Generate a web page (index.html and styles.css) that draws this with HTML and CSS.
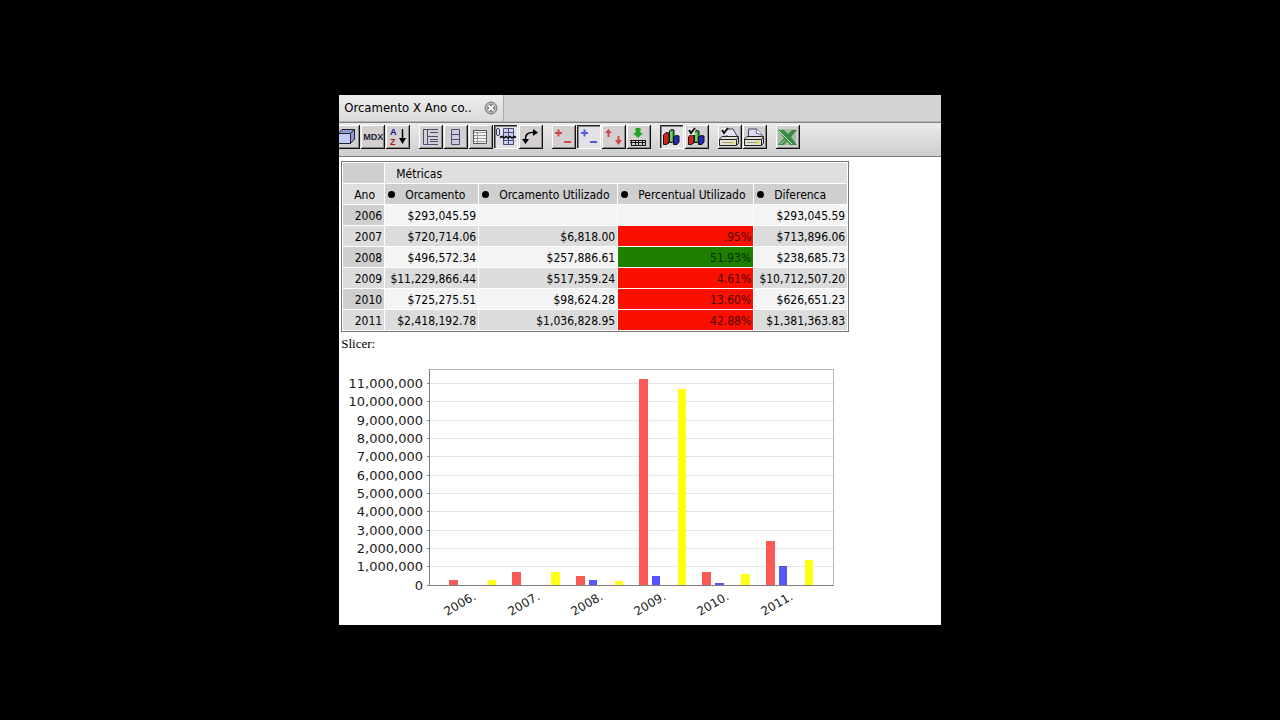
FILE: index.html
```html
<!DOCTYPE html>
<html lang="pt">
<head>
	<meta charset="UTF-8">
	<title>Orcamento X Ano</title>
	<link rel="stylesheet" href="styles.css">
</head>
<body>
	<div class="window">
		<div class="tabs">
			<div class="tab">
				<button class="tab_title">Orcamento X Ano co..</button>
				<button class="close" aria-label="Fechar">
					<svg width="14" height="14" viewBox="0 0 14 14">
						<circle cx="7" cy="7" r="6" fill="#b4b4b4" stroke="#777"/>
						<path d="M4.5 4.5L9.5 9.5M9.5 4.5L4.5 9.5" stroke="#666" stroke-width="4"/>
						<path d="M4.5 4.5L9.5 9.5M9.5 4.5L4.5 9.5" stroke="#fff" stroke-width="2"/>
					</svg>
				</button>
			</div>
		</div>
		<div class="toolbar">
			<div class="group">
				<button class="tool" aria-label="Cubo">
					<svg viewBox="0 0 24 24"><path d="M2 8.5L6 4.5H18.5V14L14.5 18.5H2z" fill="#8f9ad0" stroke="#223"/><path d="M2 8.5H14.5V18.5H2z" fill="#c3cbf7" stroke="#223"/><path d="M14.5 8.5L18.5 4.5" stroke="#223"/></svg>
				</button>
				<button class="tool mdx">MDX</button>
				<button class="tool" aria-label="Ordenar">
					<svg viewBox="0 0 24 24"><text class="az" x="4" y="10" fill="#15158c">A</text><text class="az" x="4" y="20" fill="#b01414">Z</text><path d="M16.5 4V17" stroke="#000" stroke-width="1.5"/><path d="M13 13H20L16.5 19z"/></svg>
				</button>
			</div>
			<div class="group">
				<button class="tool" aria-label="Membros pai">
					<svg viewBox="0 0 24 24"><path d="M4 4.5H19M4.5 4.5V19.5H8M8.5 4.5V11.5H19M11 7.5H19M8.5 11.5V19.5H19M11 14.5H19M11 16.5H19" fill="none" stroke="#4b4b78"/></svg>
				</button>
				<button class="tool" aria-label="Ocultar repetidos">
					<svg viewBox="0 0 24 24"><path d="M7.5 4.5H15.5V19.5H7.5zM7.5 9.5H15.5M7.5 14.5H15.5" fill="#ccd" stroke="#4b4b78"/></svg>
				</button>
				<button class="tool" aria-label="Propriedades">
					<svg viewBox="0 0 24 24"><path d="M4.5 5.5H17.5V18.5H4.5z" fill="#f4f4ee" stroke="#555"/><path d="M5 7.5H17M5 10.5H17M5 13.5H17M5 16.5H17M8.5 8V18" stroke="#999"/></svg>
				</button>
				<button class="tool pressed" aria-label="Suprimir vazios">
					<svg viewBox="0 0 24 24"><rect x="2.5" y="3.5" width="3" height="7" rx="1.5" fill="none" stroke="#336"/><path d="M9.5 3.5H19.5V19.5H9.5zM14.5 3.5V19.5M9.5 7.5H19.5M9.5 15.5H19.5" fill="#ccd0ee" stroke="#4b4b78"/><path d="M6 12.5L8 11.5L10 13L12 11.5L14 13L16 11.5L18 13L20 11.5L22 12.5" fill="none" stroke="#000" stroke-width="1.5"/></svg>
				</button>
				<button class="tool" aria-label="Trocar eixos">
					<svg viewBox="0 0 24 24"><path d="M6.5 16V13Q7 7.5 13 7.5H16" fill="none" stroke="#000" stroke-width="1.5"/><path d="M14 4L19 7.5L14 11zM3 14H10L6.5 19z"/></svg>
				</button>
			</div>
			<div class="group">
				<button class="tool" aria-label="Detalhar membro">
					<svg viewBox="0 0 24 24"><path d="M3 8H10M6.5 4.5V11.5M12 17H19" stroke="#d04545" stroke-width="2"/></svg>
				</button>
				<button class="tool pressed" aria-label="Detalhar posição">
					<svg viewBox="0 0 24 24"><path d="M4 8H11M7.5 4.5V11.5M13 17H20" stroke="#5258dc" stroke-width="2"/></svg>
				</button>
				<button class="tool" aria-label="Substituir">
					<svg viewBox="0 0 24 24"><path d="M6.5 7V12M16.5 11V17" stroke="#d04545" stroke-width="2"/><path d="M3 8L6.5 4L10 8zM13 15H20L16.5 20z" fill="#d04545"/></svg>
				</button>
				<button class="tool" aria-label="Detalhar tabela">
					<svg viewBox="0 0 24 24"><path d="M8.5 3H13.5V8H16L11 13L6 8H8.5z" fill="#22a522"/><path d="M3 15.5H19M3 17.5H19M4 20.5H19M4.5 15V20M8.5 15V20M11.5 15V20M15.5 15V20M18.5 15V20" stroke="#111"/></svg>
				</button>
			</div>
			<div class="group">
				<button class="tool pressed" aria-label="Mostrar gráfico">
					<svg viewBox="0 0 24 24"><g stroke="#111"><path d="M3.5 10L6 7.5L9 8V18L6 19.5H3.5z" fill="#d32020"/><path d="M9.5 6L11 4.5L14 5V16L12 17.5H9.5z" fill="#35b535"/><path d="M13.5 12L16 10.5L19 11V17L17 19.5H13.5z" fill="#2929b5"/></g><path d="M11 7V16" stroke="#a2f0a2"/></svg>
				</button>
				<button class="tool" aria-label="Configurar gráfico">
					<svg viewBox="0 0 24 24"><g stroke="#111"><path d="M3.5 12L6 9.5L9 10V18L6 19.5H3.5z" fill="#d32020"/><path d="M9.5 7L11 5.5L14 6V16L12 17.5H9.5z" fill="#35b535"/><path d="M13.5 12L16 10.5L19 11V17L17 19.5H13.5z" fill="#2929b5"/></g><path d="M11 8V16" stroke="#a2f0a2"/><path d="M3 3H10V10H3z" fill="#eee"/><path d="M4 5L6 8L10 3" fill="none" stroke="#111" stroke-width="2"/></svg>
				</button>
			</div>
			<div class="group">
				<button class="tool" aria-label="Configurar impressão">
					<svg viewBox="0 0 24 24"><path d="M9 12V4H15L19 11V13z" fill="#e3e3fa" stroke="#445"/><path d="M1.5 14L4 11.5H20.5V18L18.5 20.5H1.5z" fill="#e2e2d4" stroke="#222"/><path d="M2 14.5H18.5V20M18.5 14.5L20.5 12" fill="none" stroke="#222"/><path d="M4 17.5H16" stroke="#9c9c70"/><path d="M13 17.5H16" stroke="#d7d717" stroke-width="2"/><path d="M3 3H10V10H3z" fill="#eee"/><path d="M4 5L6 8L10 3" fill="none" stroke="#111" stroke-width="2"/></svg>
				</button>
				<button class="tool" aria-label="Imprimir">
					<svg viewBox="0 0 24 24"><path d="M5.5 12V4H14L19 10V13z" fill="#dcdcfa" stroke="#445"/><path d="M14 4L13 8L19 10" fill="#fff" stroke="#667"/><path d="M1.5 14L4 11.5H20.5V18L18.5 20.5H1.5z" fill="#e2e2d4" stroke="#222"/><path d="M2 14.5H18.5V20M18.5 14.5L20.5 12" fill="none" stroke="#222"/><path d="M4 17.5H16" stroke="#9c9c70"/><path d="M13 17.5H16" stroke="#d7d717" stroke-width="2"/></svg>
				</button>
			</div>
			<div class="group">
				<button class="tool" aria-label="Excel">
					<svg viewBox="0 0 24 24"><path d="M2 4H20V20H2z" fill="#a9bda6"/><path d="M2 5H8L12 9L16 5H21L15 12L21 20H14L11 16L8 20H2L8 13z" fill="#3b8b45"/><path d="M3 6L16 19M5 19L9 15" stroke="#c8e0c8"/></svg>
				</button>
			</div>
		</div>
		<div class="content">
			<table class="pivot">
				<colgroup><col class="c_year"><col class="c_value"><col class="c_used"><col class="c_percent"><col class="c_value"></colgroup>
				<thead>
					<tr><th class="corner"></th><th class="measures" colspan="4">Métricas</th></tr>
					<tr><th class="axis">Ano</th><th class="sort">Orcamento</th><th class="sort">Orcamento Utilizado</th><th class="sort">Percentual Utilizado</th><th class="sort">Diferenca</th></tr>
				</thead>
				<tbody>
					<tr><th>2006</th><td>$293,045.59</td><td></td><td></td><td>$293,045.59</td></tr>
					<tr><th>2007</th><td>$720,714.06</td><td>$6,818.00</td><td class="red">.95%</td><td>$713,896.06</td></tr>
					<tr><th>2008</th><td>$496,572.34</td><td>$257,886.61</td><td class="green">51.93%</td><td>$238,685.73</td></tr>
					<tr><th>2009</th><td>$11,229,866.44</td><td>$517,359.24</td><td class="red">4.61%</td><td>$10,712,507.20</td></tr>
					<tr><th>2010</th><td>$725,275.51</td><td>$98,624.28</td><td class="red">13.60%</td><td>$626,651.23</td></tr>
					<tr><th>2011</th><td>$2,418,192.78</td><td>$1,036,828.95</td><td class="red">42.88%</td><td>$1,381,363.83</td></tr>
				</tbody>
			</table>
			<p class="slicer">Slicer:</p>
			<svg class="chart" viewBox="0 0 500 265" role="img" aria-label="Orcamento por ano">
				<path class="grid" d="M89 23.5H492M89 41.5H492M89 60.5H492M89 78.5H492M89 96.5H492M89 115.5H492M89 133.5H492M89 151.5H492M89 170.5H492M89 188.5H492M89 206.5H492"/>
				<g class="orcamento">
					<rect x="108" y="220" width="9" height="5"/>
					<rect x="171" y="212" width="9" height="13"/>
					<rect x="235" y="216" width="9" height="9"/>
					<rect x="298" y="19" width="9" height="206"/>
					<rect x="361" y="212" width="9" height="13"/>
					<rect x="425" y="181" width="9" height="44"/>
				</g>
				<g class="utilizado">
					<rect x="248" y="220" width="8" height="5"/>
					<rect x="311" y="216" width="8" height="9"/>
					<rect x="374" y="223" width="9" height="2"/>
					<rect x="438" y="206" width="8" height="19"/>
				</g>
				<g class="diferenca">
					<rect x="147" y="220" width="8" height="5"/>
					<rect x="210" y="212" width="9" height="13"/>
					<rect x="274" y="221" width="8" height="4"/>
					<rect x="337" y="29" width="8" height="196"/>
					<rect x="400" y="214" width="9" height="11"/>
					<rect x="464" y="200" width="8" height="25"/>
				</g>
				<path class="frame" d="M88 9.5H492.5V225"/>
				<path class="axis_line" d="M88.5 9V225.5H493M86 23.5H88M86 41.5H88M86 60.5H88M86 78.5H88M86 96.5H88M86 115.5H88M86 133.5H88M86 151.5H88M86 170.5H88M86 188.5H88M86 206.5H88M86 225.5H88"/>
				<g class="scale">
					<text x="82" y="28">11,000,000</text>
					<text x="82" y="46">10,000,000</text>
					<text x="82" y="65">9,000,000</text>
					<text x="82" y="83">8,000,000</text>
					<text x="82" y="101">7,000,000</text>
					<text x="82" y="120">6,000,000</text>
					<text x="82" y="138">5,000,000</text>
					<text x="82" y="156">4,000,000</text>
					<text x="82" y="175">3,000,000</text>
					<text x="82" y="193">2,000,000</text>
					<text x="82" y="211">1,000,000</text>
					<text x="82" y="230">0</text>
				</g>
				<g class="years">
					<text transform="translate(106 256) rotate(-30)">2006.</text>
					<text transform="translate(170 256) rotate(-30)">2007.</text>
					<text transform="translate(233 256) rotate(-30)">2008.</text>
					<text transform="translate(296 256) rotate(-30)">2009.</text>
					<text transform="translate(359 256) rotate(-30)">2010.</text>
					<text transform="translate(423 256) rotate(-30)">2011.</text>
				</g>
			</svg>
		</div>
	</div>
</body>
</html>
```
FILE: styles.css
```css
*{
	margin: 0;
	padding: 0;
	box-sizing: border-box;
}
body{
	display: flex;
	align-items: center;
	justify-content: center;
	min-height: 100vh;
	background-color: #000;
	font-family: "DejaVu Sans Condensed", "DejaVu Sans", sans-serif;
	font-size: 12px;
	color: #000;
}
button{
	border: 0;
	background: none;
	font-family: inherit;
	cursor: pointer;
}
svg{
	display: block;
}
.window{
	width: 47%;
	min-width: 520px;
	overflow: hidden;
	background-color: #fff;
}
.tabs{
	display: flex;
	height: 27px;
	background-color: #d3d3d3;
	border-bottom: 1px solid #b5b5b5;
}
.tab{
	display: flex;
	align-items: center;
	gap: 12px;
	padding: 0 5px;
	background: linear-gradient(#ececec, #dcdcdc);
	border-right: 1px solid #aaa;
}
.tab_title{
	font-size: 13px;
	line-height: 20px;
	white-space: nowrap;
}
.toolbar{
	display: flex;
	gap: 9px;
	height: 35px;
	padding-top: 2px;
	background: linear-gradient(#ebebeb, #cdcdcd);
	border-top: 1px solid #808080;
	border-bottom: 1px solid #777;
}
.group{
	display: flex;
	gap: 1px;
}
.group:first-child{
	margin-left: -3px;
}
.tool{
	flex: none;
	width: 24px;
	height: 24px;
	background-color: #d4d0d0;
	box-shadow: inset -1px -1px #111, inset 1px 1px #fff, inset -2px -2px #888;
}
.tool.pressed{
	background-color: #e2e2e6;
	box-shadow: inset -1px -1px #fff, inset 1px 1px #222, inset 2px 2px #888;
}
.mdx{
	font-family: "Liberation Sans", sans-serif;
	font-size: 9px;
	font-weight: bold;
	color: #223;
}
.az{
	font-family: "Liberation Sans", sans-serif;
	font-size: 9px;
	font-weight: bold;
}
.content{
	padding: 4px 2px 0;
}
.pivot{
	width: 508px;
	table-layout: fixed;
	border: 1px solid #777;
	border-spacing: 1px;
}
.c_year{
	width: 41px;
}
.c_value{
	width: 93px;
}
.c_used{
	width: 138px;
}
.c_percent{
	width: 135px;
}
.pivot th,
.pivot td{
	height: 20px;
	padding: 2px 2px 0;
	line-height: 18px;
	font-weight: normal;
	text-align: right;
	white-space: nowrap;
}
.pivot td{
	background-color: #f4f4f4;
}
.pivot th{
	background-color: #cfcfcf;
}
.pivot tbody tr:nth-child(even) th,
.pivot tbody tr:nth-child(even) td{
	background-color: #dcdcdc;
}
.pivot .measures,
.pivot .axis{
	padding-left: 11px;
	background-color: #dedede;
	text-align: left;
}
.pivot .sort{
	text-align: left;
}
.sort::before{
	content: "";
	display: inline-block;
	width: 7px;
	height: 7px;
	margin: 0 10px 1px 1px;
	border-radius: 50%;
	background-color: #000;
}
.pivot tbody tr td.red,
.pivot tbody tr:nth-child(even) td.red{
	background-color: #fb1000;
	color: #4a0a00;
}
.pivot tbody tr td.green{
	background-color: #1f8000;
	color: #062c00;
}
.slicer{
	padding-top: 4px;
	font-family: "Liberation Serif", serif;
	font-size: 13px;
	line-height: 16px;
}
.chart{
	width: 500px;
	height: 265px;
	margin-top: 8px;
	font-family: "DejaVu Sans", sans-serif;
	font-size: 12px;
	fill: #222;
}
.grid{
	stroke: #dcdcdc;
	stroke-dasharray: 3 1;
}
.frame{
	fill: none;
	stroke: #b8b8b8;
}
.axis_line{
	fill: none;
	stroke: #808080;
}
.orcamento{
	fill: #fa5a55;
}
.utilizado{
	fill: #5555fa;
}
.diferenca{
	fill: #ffff11;
}
.scale{
	font-size: 13px;
	text-anchor: end;
}
```
